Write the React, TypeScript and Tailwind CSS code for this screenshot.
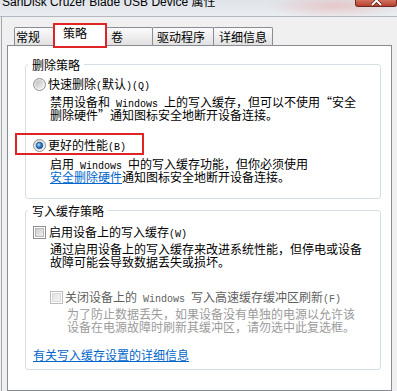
import { ReactNode } from 'react';

// SimSun-like half-width Latin run (6px per char at 10px mono)
function M({ children }: { children: ReactNode }) {
  return <span className="font-['Liberation_Mono',monospace] text-[10px] leading-none">{children}</span>;
}

function L({ children, className = '' }: { children: ReactNode; className?: string }) {
  return <div className={`h-[13px] ${className}`}>{children}</div>;
}

function Radio({ checked, id }: { checked?: boolean; id: string }) {
  return (
    <svg width="13" height="13" viewBox="0 0 13 13" className="shrink-0">
      <defs>
        <linearGradient id={`${id}-o`} x1="0" y1="0" x2="1" y2="1">
          <stop offset="0" stopColor="#d9d9d9" />
          <stop offset="1" stopColor="#ffffff" />
        </linearGradient>
        <linearGradient id={`${id}-i`} x1="0" y1="0" x2="1" y2="1">
          <stop offset="0" stopColor="#bcbcbc" />
          <stop offset="1" stopColor="#f4f4f4" />
        </linearGradient>
        <radialGradient id={`${id}-d`} cx="0.4" cy="0.4" r="0.6">
          <stop offset="0" stopColor="#c4e6fc" />
          <stop offset="0.45" stopColor="#3f8fd6" />
          <stop offset="1" stopColor="#124a86" />
        </radialGradient>
      </defs>
      <circle cx="6.5" cy="6.5" r="6" fill={`url(#${id}-o)`} stroke="#8e8f8f" />
      <circle cx="6.5" cy="6.5" r="4.2" fill={`url(#${id}-i)`} />
      {checked && <circle cx="6.5" cy="6.5" r="3.3" fill={`url(#${id}-d)`} stroke="#1d4f86" strokeWidth="0.6" />}
    </svg>
  );
}

function Check({ disabled, id }: { disabled?: boolean; id: string }) {
  return (
    <svg width="13" height="13" viewBox="0 0 13 13" className="shrink-0">
      <defs>
        <linearGradient id={`${id}-g`} x1="0" y1="0" x2="1" y2="1">
          <stop offset="0" stopColor={disabled ? '#e2e2e2' : '#c9c9c9'} />
          <stop offset="1" stopColor={disabled ? '#f7f7f7' : '#f3f3f3'} />
        </linearGradient>
      </defs>
      <rect x="0.5" y="0.5" width="12" height="12" fill="#fff" stroke={disabled ? '#bcbcbc' : '#8e8f8f'} />
      <rect x="2.5" y="2.5" width="8" height="8" fill={`url(#${id}-g)`} stroke={disabled ? '#dadada' : '#b9b9b9'} />
    </svg>
  );
}

function Tab({ label, w, pl }: { label: string; w: string; pl: string }) {
  return (
    <div
      className={`${w} ${pl} h-[18px] pt-[2px] border border-b-0 border-[#898c95] rounded-t-[2px] bg-gradient-to-b from-[#fbfbfb] to-[#e1e1e1] whitespace-nowrap -ml-px first:ml-0`}
    >
      {label}
    </div>
  );
}

export default function App() {
  return (
    <div className="w-[397px] h-[391px] overflow-hidden flex flex-col bg-[#f0f0f0] font-['Noto_Sans_CJK_SC',sans-serif] text-[12px] leading-[13px] text-black">
      {/* title bar */}
      <div className="h-[16px] flex items-start overflow-hidden bg-[radial-gradient(ellipse_70px_12px_at_335px_6px,rgba(232,160,160,0.45),transparent_100%),linear-gradient(#dfe4ea,#eaedf1)]">
        <div className="pl-[2px] -mt-[6px] font-['Liberation_Sans','Noto_Sans_CJK_SC',sans-serif] text-[12px] leading-[16px] whitespace-nowrap">
          SanDisk Cruzer Blade USB Device 属性
        </div>
        <div className="ml-auto w-[42px] h-[7px] rounded-b-[3px] border border-t-0 border-[#6e2a22] bg-gradient-to-b from-[#d2705f] to-[#b8402e]">
          <svg width="40" height="6" viewBox="0 0 40 6">
            <path d="M16 -4 L25 5 M25 -4 L16 5" stroke="#5a1a12" strokeWidth="3.4" />
            <path d="M16 -4 L25 5 M25 -4 L16 5" stroke="#ffffff" strokeWidth="2" />
          </svg>
        </div>
      </div>
      <div className="h-px bg-[#b4b9bf]" />

      <div className="flex-1 flex min-h-0">
        <div className="w-px ml-px bg-[#a3a8ae]" />
        <div className="flex-1 pl-[5px] pt-[6px] flex flex-col min-h-0">
          {/* tabs */}
          <div className="h-[22px] pl-[7px] flex items-end">
            <Tab label="常规" w="w-[40px]" pl="pl-[1px]" />
            <div className="relative z-10 w-[54px] h-[25px] -mb-[3px] -ml-px border-2 border-[#e02424] bg-white pt-[1px] pl-[8px] whitespace-nowrap">
              策略
            </div>
            <Tab label="卷" w="w-[47px]" pl="pl-[4px]" />
            <Tab label="驱动程序" w="w-[62px]" pl="pl-[4px]" />
            <Tab label="详细信息" w="w-[60px]" pl="pl-[5px]" />
          </div>

          {/* panel */}
          <div className="flex-1 w-[385px] border border-[#898c95] bg-white">
            <fieldset className="mt-[12px] ml-[17px] w-[356px] border border-[#d5dfe5] rounded-[3px] pl-[2px] pb-[15px]">
              <legend className="px-[4px] h-[13px] leading-[13px]">删除策略</legend>
              <div className="pl-[5px] whitespace-nowrap">
                <div className="mt-[7px] h-[13px] flex items-center gap-[2px]">
                  <Radio id="rq" />
                  <span>快速删除<M>(</M>默认<M>)(Q)</M></span>
                </div>
                <div className="mt-[4px] pl-[17px]">
                  <L>禁用设备和<M> Windows </M>上的写入缓存，但可以不使用“安全</L>
                  <L>删除硬件”通知图标安全地断开设备连接。</L>
                </div>
                <div className="relative mt-[18px] h-[13px] flex items-center gap-[2px]">
                  <Radio id="rb" checked />
                  <span>更好的性能<M>(B)</M></span>
                  <div className="absolute -left-[18px] -top-[6px] w-[129px] h-[22px] border-2 border-[#e02424] pointer-events-none" />
                </div>
                <div className="mt-[5px] pl-[17px]">
                  <L>启用<M> Windows </M>中的写入缓存功能，但你必须使用</L>
                  <L>
                    <span className="text-[#0066cc] underline">安全删除硬件</span>通知图标安全地断开设备连接。
                  </L>
                </div>
              </div>
            </fieldset>

            <fieldset className="mt-[5px] ml-[17px] w-[356px] border border-[#d5dfe5] rounded-[3px] pl-[2px] pb-[8px]">
              <legend className="px-[4px] h-[13px] leading-[13px]">写入缓存策略</legend>
              <div className="pl-[5px] whitespace-nowrap">
                <div className="mt-[9px] h-[13px] flex items-center gap-[3px]">
                  <Check id="cw" />
                  <span>启用设备上的写入缓存<M>(W)</M></span>
                </div>
                <div className="mt-[3px] pl-[17px]">
                  <L>通过启用设备上的写入缓存来改进系统性能，但停电或设备</L>
                  <L>故障可能会导致数据丢失或损坏。</L>
                </div>
                <div className="mt-[23px] pl-[17px] h-[13px] flex items-center gap-[2px] text-[#5f5f5f]">
                  <Check id="cf" disabled />
                  <span>关闭设备上的<M> Windows </M>写入高速缓存缓冲区刷新<M>(F)</M></span>
                </div>
                <div className="mt-[3px] pl-[34px] text-[#9b9b9b]">
                  <L>为了防止数据丢失，如果设备没有单独的电源以允许该</L>
                  <L>设备在电源故障时刷新其缓冲区，请勿选中此复选框。</L>
                </div>
                <L className="mt-[15px] text-[#0066cc] underline">有关写入缓存设置的详细信息</L>
              </div>
            </fieldset>
          </div>
        </div>
      </div>
    </div>
  );
}
